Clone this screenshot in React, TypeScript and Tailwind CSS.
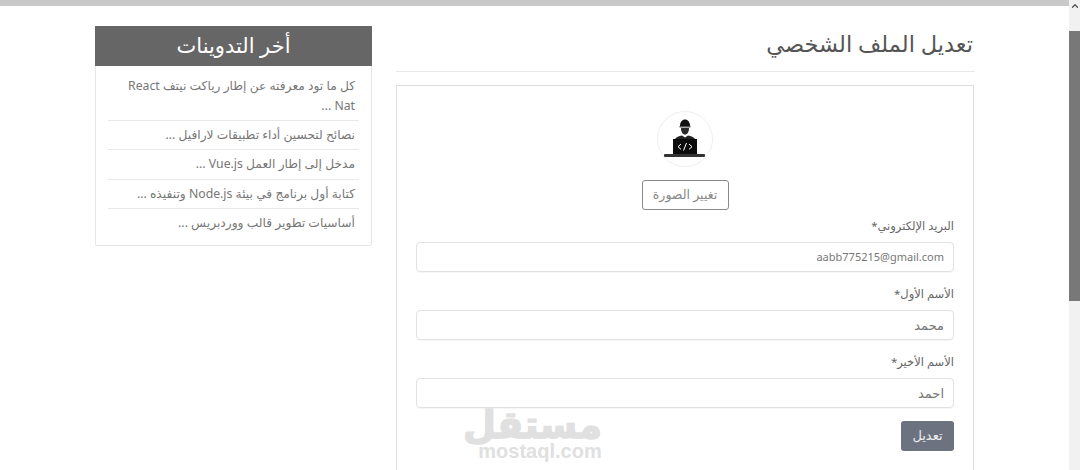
import React from 'react';
import { ChevronUp } from 'lucide-react';

const posts = [
    'كل ما تود معرفته عن إطار رياكت نيتف React Nat ...',
    'نصائح لتحسين أداء تطبيقات لارافيل ...',
    'مدخل إلى إطار العمل Vue.js ...',
    'كتابة أول برنامج في بيئة Node.js وتنفيذه ...',
    'أساسيات تطوير قالب ووردبريس ...',
];

const fields = [
    { label: 'البريد الإلكتروني*', value: 'aabb775215@gmail.com', size: 'text-[11px]' },
    { label: 'الأسم الأول*', value: 'محمد', size: 'text-[13px]' },
    { label: 'الأسم الأخير*', value: 'احمد', size: 'text-[13px]' },
];

const DeveloperIcon = () => (
    <svg viewBox="0 0 56 56" className="w-[56px] h-[56px]">
        <circle cx="28" cy="28" r="27.5" fill="#fff" stroke="#eeeeee" />
        {/* hair and head */}
        <path d="M23 15c0-4 2.200-6.500 5-6.500s5 2.500 5 6.500z" fill="#111" />
        <rect x="22.500" y="15" width="11" height="1.500" fill="#555" />
        <path d="M24 17h8c0 4-1.500 6.500-4 6.500s-4-2.500-4-6.500z" fill="#2a2a2a" />
        {/* shoulders */}
        <path d="M18 28c1-2 4-3 7-3.500l3 2 3-2c3 .5 6 1.500 7 3.500z" fill="#222" />
        {/* laptop */}
        <rect x="16" y="28" width="24" height="15" fill="#0c0c0c" />
        <rect x="7" y="43" width="41" height="3" rx="1" fill="#333" />
        <path d="M24 33l-3 2.700 3 2.700M32 33l3 2.700-3 2.700M29.500 32l-3 7.500" fill="none" stroke="#fff" strokeWidth="1" />
    </svg>
);

const App: React.FC = () => {
    return (
        <div className="w-[1080px] h-[470px] overflow-hidden flex bg-white font-['Noto_Sans','DejaVu_Sans',sans-serif] text-[#555]">
            <div className="w-[1069px] h-[470px] relative overflow-hidden">
                <div className="h-[6px] bg-[#c9c9c9]" />

                <div dir="rtl" className="flex items-start gap-[24px] pr-[94px] pt-[20px]">
                    {/* Main column */}
                    <div className="w-[579px] shrink-0">
                        <h1 className="h-[46px] pr-[2px] text-[22.500px] leading-[36px] text-[#555] font-normal border-b border-[#e8e8e8]">
                            تعديل الملف الشخصي
                        </h1>

                        <div className="mt-[13px] mr-px w-[578px] h-[500px] border border-[#dedede] px-[19px] pt-[25px]">
                            <div className="flex flex-col items-center">
                                <DeveloperIcon />
                                <button className="mt-[13px] w-[87px] h-[30px] border border-[#8a8a8a] rounded-[3px] text-[12.500px] text-[#888]">
                                    تغيير الصورة
                                </button>
                            </div>

                            <div className="mt-px">
                                {fields.map((field) => (
                                    <div key={field.label} className="mb-[7px]">
                                        <label className="block h-[31px] text-[11.500px] leading-[30px] text-[#666]">
                                            {field.label}
                                        </label>
                                        <div className={`h-[30px] border border-[#e2e2e2] rounded-[4px] px-[9px] leading-[28px] text-[#777] shadow-[0_1px_1px_rgba(0,0,0,0.04)] ${field.size}`}>
                                            {field.value}
                                        </div>
                                    </div>
                                ))}
                                <button className="mt-[6px] w-[53px] h-[30px] rounded-[3px] bg-[#6c7280] text-[#eee] text-[13px]">
                                    تعديل
                                </button>
                            </div>
                        </div>
                    </div>

                    {/* Sidebar */}
                    <aside className="w-[277px] h-[220px] border border-[#e6e6e6] rounded-[2px]">
                        <div className="-m-px h-[40px] bg-[#666666] text-white text-center text-[21px] leading-[38px]">
                            أخر التدوينات
                        </div>
                        <ul className="mt-[11px] px-[12px]">
                            {posts.map((post) => (
                                <li key={post} className="border-b last:border-b-0 border-[#e8e8e8] pr-[4px] pl-[16px] pt-[4px] first:pt-0 pb-[4.500px] first:pb-[3.500px] text-[12.250px] leading-[20px] text-[#777]">
                                    {post}
                                </li>
                            ))}
                        </ul>
                    </aside>
                </div>

                {/* Watermark */}
                <div className="absolute left-[478px] top-[406px] w-[124px] text-center text-[#e0e0e0] pointer-events-none">
                    <div dir="rtl" className="text-[38px] leading-[35px] font-bold [-webkit-text-stroke:1.5px_#e0e0e0]">مستقل</div>
                    <div className="font-['Liberation_Sans',sans-serif] text-[20px] leading-[20px] font-bold">mostaql.com</div>
                </div>
            </div>

            {/* Scrollbar */}
            <div className="w-[11px] h-[470px] bg-[#f1f1f1] flex flex-col">
                <div className="h-[31px] pt-px flex justify-center">
                    <ChevronUp size={10} strokeWidth={3} className="text-[#555]" />
                </div>
                <div className="h-[270px] bg-[#787878]" />
            </div>
        </div>
    );
};

export default App;
